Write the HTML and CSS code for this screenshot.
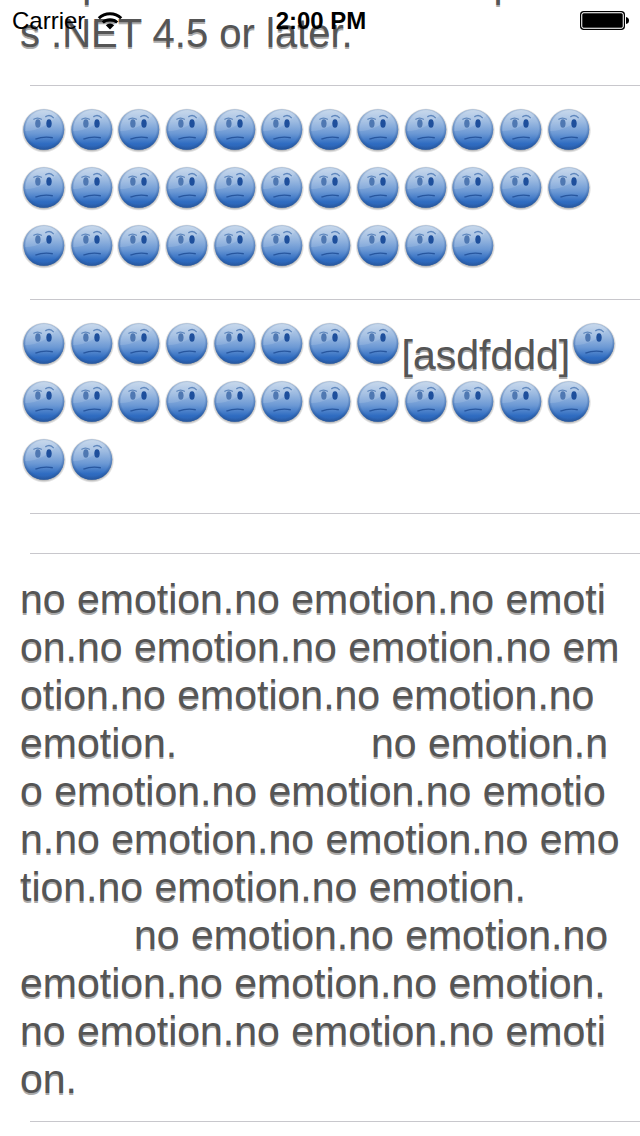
FILE: index.html
```
<!DOCTYPE html>
<html lang="en">
<head>
<meta charset="utf-8">
<meta name="viewport" content="width=device-width">
<title>Messages</title>
<link rel="stylesheet" href="styles.css">
</head>
<body>
<svg class="defs" aria-hidden="true">
  <defs>
    <linearGradient id="ball" x1="0" y1="0" x2="0" y2="1">
      <stop offset="0" stop-color="#c3d5ea"/>
      <stop offset=".3" stop-color="#9dbbe1"/>
      <stop offset=".6" stop-color="#6b98d4"/>
      <stop offset=".85" stop-color="#2f6cc1"/>
      <stop offset="1" stop-color="#2b61b0"/>
    </linearGradient>
    <radialGradient id="rim" cx=".5" cy=".47" r=".53">
      <stop offset=".82" stop-color="#234f90" stop-opacity="0"/>
      <stop offset="1" stop-color="#234f90" stop-opacity=".6"/>
    </radialGradient>
    <radialGradient id="shade">
      <stop offset=".85" stop-color="#333" stop-opacity=".45"/>
      <stop offset="1" stop-color="#333" stop-opacity="0"/>
    </radialGradient>
    <symbol id="face" viewBox="0 0 48 48">
      <circle cx="24" cy="24.5" r="22.5" fill="url(#shade)"/>
      <circle cx="24" cy="23.500" r="20.500" fill="url(#ball)"/>
      <circle cx="24" cy="23.500" r="20.500" fill="url(#rim)"/>
      <path d="M5 25C13 26 30 20 38 9A20 20 0 0 0 5 25Z" fill="#fff" opacity=".12"/>
      <ellipse cx="18" cy="17.500" rx="2.700" ry="4.300" fill="#4f78b2"/>
      <ellipse cx="29.200" cy="17.500" rx="2.700" ry="4.300" fill="#1e4f9c"/>
      <path d="M13.500 13.500Q17.500 10.500 22 13.500M25.500 10.800Q30 7.500 34 12" fill="none" stroke="#5f87bd" stroke-width="1.300"/>
      <path d="M15.500 33.200Q24 30 33 31.800" fill="none" stroke="#27569e" stroke-width="1.300"/>
    </symbol>
  </defs>
</svg>

<header class="status">
  <div class="carrier">
    <span>Carrier</span>
    <svg class="wifi" viewBox="0 0 26 20" role="img" aria-label="Wi-Fi">
      <g fill="none" stroke="#000" stroke-width="3">
        <path d="M1.800 7.200A16 16 0 0 1 24.200 7.200"/>
        <path d="M5.800 11.500A10.500 10.500 0 0 1 20.200 11.500"/>
      </g>
      <path d="M13 18.500L8.800 14.300A6 6 0 0 1 17.200 14.300Z"/>
    </svg>
  </div>
  <time class="clock">2:00 PM</time>
  <svg class="battery" viewBox="0 0 50 20" role="img" aria-label="Battery full">
    <rect x=".75" y=".75" width="43.500" height="17.500" rx="3" fill="#fff" stroke="#000" stroke-width="1.500"/>
    <rect x="2" y="2" width="41" height="15" rx="1.500"/>
    <rect x="1.800" y="1.800" width="41.400" height="15.400" rx="2" fill="none" stroke="#fff" stroke-width=".9"/>
    <path d="M46 6Q49 6.500 49 9.500Q49 12.500 46 13Z"/>
  </svg>
</header>

<main class="messages">
  <article class="cell first"><p class="text"> HttpClient iOS client to require to
s .NET 4.5 or later.</p></article>
  <article class="cell faces" data-count="34"></article>
  <article class="cell faces" data-count="8" data-word="[asdfddd]" data-after="15"></article>
  <article class="cell empty"></article>
  <article class="cell long"><p class="text">no emotion.no emotion.no emoti
on.no emotion.no emotion.no em
otion.no emotion.no emotion.no
emotion.                 no emotion.n
o emotion.no emotion.no emotio
n.no emotion.no emotion.no emo
tion.no emotion.no emotion.
          no emotion.no emotion.no
emotion.no emotion.no emotion.
no emotion.no emotion.no emoti
on.</p></article>
</main>
<script src="faces.js"></script>
</body>
</html>
```
FILE: styles.css
```
* { box-sizing: border-box; }
body {
  margin: 0;
  background: #fff;
  color: #000;
  font-family: "Liberation Sans", Arial, sans-serif;
  overflow-x: hidden;
}
.defs { position: absolute; width: 0; height: 0; }

/* The status bar floats over the scrolled list. */
.status {
  position: absolute;
  top: 0;
  left: 0;
  right: 0;
  z-index: 1;
  height: 40px;
  padding: 1px 10px 0 12px;
  display: grid;
  grid-template-columns: 1fr auto 1fr;
  align-items: center;
  font-size: 24px;
  line-height: 40px;
}
.carrier { display: flex; align-items: center; gap: 12px; }
.wifi { width: 26px; height: 20px; }
.clock { font-weight: bold; }
.battery { width: 50px; height: 20px; justify-self: end; }

.messages { margin-top: -42px; }
.cell {
  padding: 15px 20px 24px;
  background: linear-gradient(#c8c7cc, #c8c7cc) 30px 100% / 100% 1px no-repeat;
}
.cell.first { padding: 0 20px 28px; }
.cell.first .text { font-size: 40px; line-height: 50px; }
.cell.empty { padding: 20px; }
.cell.long { padding: 21px 20px 19px; }
.text {
  margin: 0;
  color: #555;
  font-size: 41px;
  line-height: 48px;
  white-space: pre;
  text-shadow: 0 2px 0 #aaa;
}
.faces { display: flex; flex-wrap: wrap; padding-bottom: 25px; }
.face { width: calc(100% / 12.58); height: 58px; }
.word {
  align-self: flex-end;
  color: #555;
  font-size: 41px;
  line-height: 36px;
  text-shadow: 0 2px 0 #aaa;
}
```
FILE: faces.js
```
const addFaces = (cell, count) => {
  for (let i = 0; i < count; i++) {
    cell.insertAdjacentHTML("beforeend",
      '<svg class="face" role="img" aria-label="confused"><use href="#face"/></svg>');
  }
};

document.querySelectorAll(".faces").forEach((cell) => {
  addFaces(cell, Number(cell.dataset.count));
  if (cell.dataset.word) {
    const word = document.createElement("span");
    word.className = "word";
    word.textContent = cell.dataset.word;
    cell.append(word);
    addFaces(cell, Number(cell.dataset.after));
  }
});
```
